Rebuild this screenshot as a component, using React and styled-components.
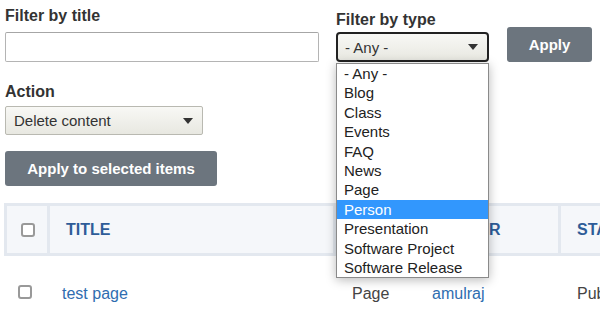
import styled, { createGlobalStyle } from "styled-components";

const GlobalStyle = createGlobalStyle`
  html, body {
    margin: 0;
    padding: 0;
    background: #fff;
    overflow: hidden;
  }
  body {
    font-family: "Liberation Sans", Arial, sans-serif;
    color: #333;
  }
`;

const Page = styled.div`
  padding: 7px 0 0 5px;
  width: 760px;
`;

const FilterRow = styled.div`
  display: flex;
  align-items: flex-end;
  gap: 17px;
`;

const Field = styled.div`
  position: relative;
  display: flex;
  flex-direction: column;
  width: ${(p) => p.$width}px;
`;

const Label = styled.label`
  font-size: 16px;
  font-weight: bold;
  line-height: 18px;
  color: #333;
  margin-bottom: ${(p) => p.$gap ?? 7}px;
  margin-top: ${(p) => p.$top ?? 0}px;
`;

const TextInput = styled.input`
  box-sizing: border-box;
  height: 30px;
  width: 100%;
  border: 1px solid #b4b4b4;
  border-top-color: #a6a6a6;
  border-radius: 2px;
  background: #fff;
  padding: 0 8px;
  font: inherit;
  font-size: 15px;
  outline: none;
`;

const FakeSelect = styled.div`
  box-sizing: border-box;
  display: flex;
  align-items: center;
  justify-content: space-between;
  width: ${(p) => p.$width}px;
  height: ${(p) => p.$height}px;
  padding: 0 9px 0 ${(p) => (p.$focused ? 7 : 8)}px;
  border: ${(p) => (p.$focused ? "2px solid #222" : "1px solid #b9b9b1")};
  border-radius: ${(p) => (p.$focused ? 4 : 2)}px;
  background: linear-gradient(#f8f8f5, #e8e8e1);
  font-size: 15px;
  color: #333;
`;

const Caret = styled.span`
  width: 0;
  height: 0;
  border-left: 5px solid transparent;
  border-right: 5px solid transparent;
  border-top: 6px solid #333;
`;

const OptionList = styled.ul`
  position: absolute;
  top: 100%;
  left: 0;
  margin: 1px 0 0;
  padding: 0;
  list-style: none;
  box-sizing: border-box;
  width: 100%;
  background: #fff;
  border: 1px solid #8a8a8a;
  box-shadow: 0 2px 10px rgba(0, 0, 0, 0.28);
  z-index: 10;
`;

const Option = styled.li`
  height: 19.4px;
  line-height: 19.4px;
  padding-left: 7px;
  font-size: 15px;
  color: ${(p) => (p.$active ? "#fff" : "#222")};
  background: ${(p) => (p.$active ? "#3297fd" : "transparent")};
  white-space: nowrap;
`;

const Button = styled.button`
  box-sizing: border-box;
  height: 35px;
  padding: 0;
  width: ${(p) => p.$width}px;
  margin-left: ${(p) => p.$shift ?? 0}px;
  margin-top: ${(p) => p.$top ?? 0}px;
  border: none;
  border-radius: 3px;
  background: #6c757e;
  color: #fff;
  font-family: inherit;
  font-size: 15px;
  font-weight: bold;
`;

const ActionBlock = styled.div`
  display: flex;
  flex-direction: column;
  align-items: flex-start;
`;

const Table = styled.table`
  margin: 17px 0 0 -1px;
  border-collapse: separate;
  border-spacing: 0;
  table-layout: fixed;
  width: 716px;
`;

const HeadCell = styled.th`
  height: 47px;
  padding: 0 0 0 ${(p) => p.$pad ?? 16}px;
  text-align: left;
  vertical-align: middle;
  background: #f5f7fa;
  border-top: 3px solid #e3e8ef;
  border-bottom: 3px solid #e3e8ef;
  border-right: 3px solid #e3e8ef;
  border-left: ${(p) => (p.$first ? "3px solid #e3e8ef" : "none")};
  font-size: 16px;
  font-weight: bold;
  color: #2e5c98;
  white-space: nowrap;
  overflow: hidden;
`;

const Cell = styled.td`
  height: 70px;
  padding: 0 0 0 ${(p) => p.$pad ?? 16}px;
  vertical-align: middle;
  font-size: 16px;
  color: ${(p) => (p.$link ? "#2f6db0" : "#444")};
  white-space: nowrap;
  overflow: hidden;
  padding-top: ${(p) => (p.$box ? 0 : 3)}px;
  padding-bottom: ${(p) => (p.$box ? 1 : 0)}px;
`;

const Check = styled.input.attrs({ type: "checkbox" })`
  appearance: none;
  display: block;
  margin: 0;
  width: 14px;
  height: 14px;
  border: 2px solid #999;
  border-radius: 3px;
  background: #fff;
  box-sizing: border-box;
`;

const types = [
  "- Any -",
  "Blog",
  "Class",
  "Events",
  "FAQ",
  "News",
  "Page",
  "Person",
  "Presentation",
  "Software Project",
  "Software Release",
];

export default function App() {
  return (
    <>
      <GlobalStyle />
      <Page>
        <FilterRow>
          <Field $width={314}>
            <Label>Filter by title</Label>
            <TextInput type="text" />
          </Field>
          <Field $width={153}>
            <Label $gap={3}>Filter by type</Label>
            <FakeSelect $focused $width={153} $height={30}>
              <span>- Any -</span>
              <Caret />
            </FakeSelect>
            <OptionList>
              {types.map((t) => (
                <Option key={t} $active={t === "Person"}>
                  {t}
                </Option>
              ))}
            </OptionList>
          </Field>
          <Button $width={85} $shift={1}>
            Apply
          </Button>
        </FilterRow>

        <ActionBlock>
          <Label $top={21} $gap={5}>
            Action
          </Label>
          <FakeSelect $width={198} $height={29}>
            <span>Delete content</span>
            <Caret />
          </FakeSelect>
          <Button $width={212} $top={16}>
            Apply to selected items
          </Button>
        </ActionBlock>

        <Table>
          <colgroup>
            <col style={{ width: 46 }} />
            <col style={{ width: 286 }} />
            <col style={{ width: 80 }} />
            <col style={{ width: 145 }} />
            <col style={{ width: 159 }} />
          </colgroup>
          <thead>
            <tr>
              <HeadCell $first $pad={14}>
                <Check />
              </HeadCell>
              <HeadCell>TITLE</HeadCell>
              <HeadCell>TYPE</HeadCell>
              <HeadCell>AUTHOR</HeadCell>
              <HeadCell>STATUS</HeadCell>
            </tr>
          </thead>
          <tbody>
            <tr>
              <Cell $pad={14} $box>
                <Check />
              </Cell>
              <Cell $link $pad={12}>
                test page
              </Cell>
              <Cell>Page</Cell>
              <Cell $link>amulraj</Cell>
              <Cell>Published</Cell>
            </tr>
          </tbody>
        </Table>
      </Page>
    </>
  );
}
